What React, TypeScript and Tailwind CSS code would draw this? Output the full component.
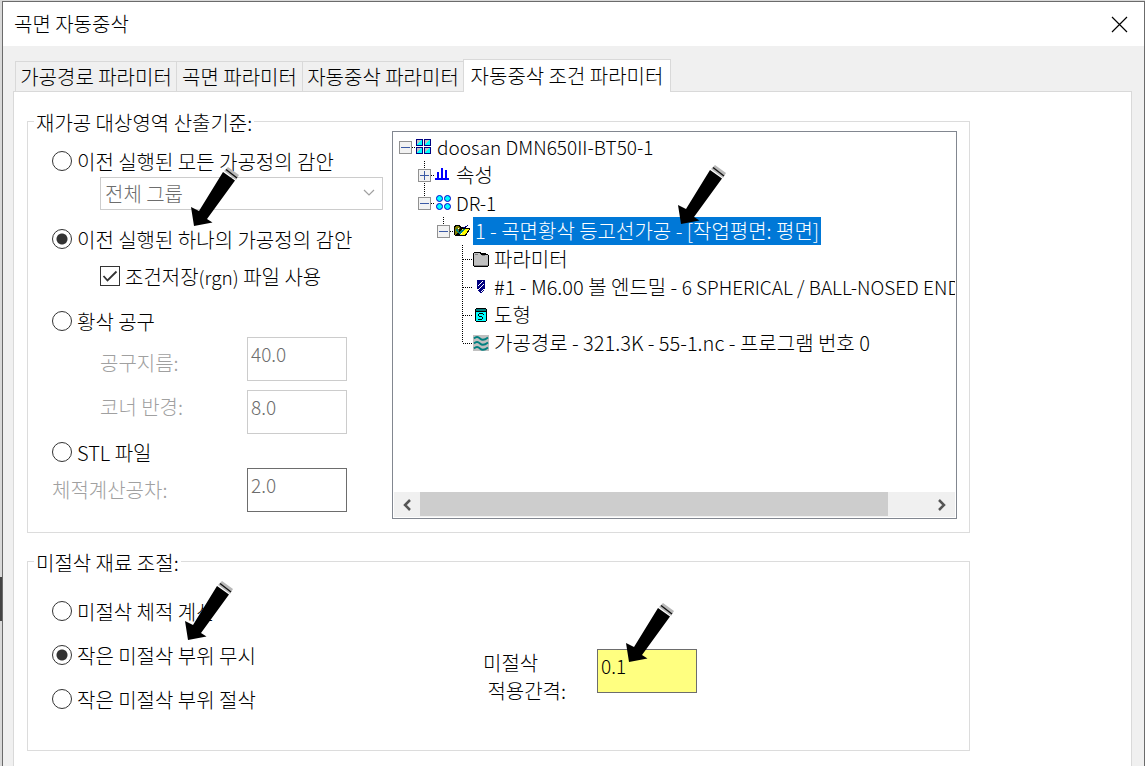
import { ReactNode } from "react";
import clsx from "clsx";

const TABS = [
  { label: "가공경로 파라미터", width: "w-[161px]" },
  { label: "곡면 파라미터", width: "w-[126px]" },
  { label: "자동중삭 파라미터", width: "w-[161px]" },
  { label: "자동중삭 조건 파라미터", width: "w-[208px]" },
];

function PointerArrow({ className }: { className: string }) {
  return (
    <svg className={clsx("pointer-events-none absolute z-10", className)} width="48" height="60" viewBox="0 0 48 60" aria-hidden="true">
      <path d="M33 4 L37 0 L48 8 L45 13Z" fill="#b9b9b9" />
      <path d="M35 2.5 L46 11" stroke="#111" strokeWidth="1.4" />
      <path d="M32 5 L44 13.500 L16 52 L21.500 55.500 L3 59 L0 40 L8 44Z" fill="#000" />
    </svg>
  );
}

function Radio({ name, label, checked, children }: { name: string; label: string; checked?: boolean; children?: ReactNode }) {
  return (
    <label className="relative flex h-7 items-center gap-[5px]">
      <input
        type="radio"
        name={name}
        defaultChecked={checked}
        className="size-5 shrink-0 appearance-none rounded-full border border-[#333] bg-white checked:bg-[radial-gradient(circle,#333_5px,#fff_6px)]"
      />
      <span className="pt-0.5">{label}</span>
      {children}
    </label>
  );
}

function NumberInput({ id, value, dark }: { id: string; value: string; dark?: boolean }) {
  return (
    <input
      id={id}
      defaultValue={value}
      disabled
      className={clsx("h-11 w-[100px] border bg-white px-[3px] pb-3 text-[19px] text-[#6d6d6d]", dark ? "border-[#6d6d6d]" : "border-[#ccc]")}
    />
  );
}

/* tree icons, drawn on a 16px grid */

function MachineIcon() {
  return (
    <>
      {[[0, 0], [8, 0], [0, 8], [8, 8]].map(([x, y]) => (
        <g key={`${x}-${y}`}>
          <rect x={x} y={y} width="7" height="7" fill="#000080" />
          <rect x={x + 1} y={y + 1} width="5" height="5" fill="#00ffff" />
          <path d={`M${x + 1} ${y + 1}h4l-4 4z`} fill="#c0c0c0" />
        </g>
      ))}
    </>
  );
}

function PropertiesIcon() {
  return <path d="M0 11h14v2H0zM2 5h2v6H2zM6 1h2v10H6zM10 3h2v8h-2z" fill="#0000ff" />;
}

function GroupIcon() {
  return (
    <g fill="#00ffff" stroke="#0000d0" shapeRendering="auto">
      <circle cx="4.500" cy="3.500" r="3" />
      <circle cx="12.500" cy="3.500" r="3" />
      <circle cx="4.500" cy="11.500" r="3" />
      <circle cx="12.500" cy="11.500" r="3" />
    </g>
  );
}

function OperationIcon() {
  return (
    <>
      <path d="M0 4l1-2h5l1 2h5v9H1L0 12z" fill="#000" />
      <path d="M1 4l1-1h3l1 2h5v1H6l-4 6H1z" fill="#808000" />
      <path d="M6 5h10v1l-4 7H2z" fill="#000" />
      <path d="M8 6h7l-4 6H6z" fill="#ffff00" />
      <path d="M2 6h2v2h1v1h1V8h1V7h2V6h2v1h-1v1H9v1H8v1H7v1H5v-1H4V9H3V8H2z" fill="#008080" />
      <path d="M9 4h2v1H9zM11 3h2v1h-2zM13 2h1v1h-1z" fill="#000080" />
      <path d="M4 5h1v1H4zM7 10h1v1H7z" fill="#fff" />
    </>
  );
}

function ParameterIcon() {
  return (
    <>
      <path d="M1 1h6l2 2V2h4v1h2v1h1v11h-1v1H1v-1H0V2h1z" fill="#000" />
      <path d="M1 2h5l2 2h7v11H1z" fill="#c0c0c0" />
      <path d="M2 3h3v1H2zM9 4h3v1H9zM1 14h14v1H1z" fill="#808080" />
    </>
  );
}

function ToolIcon() {
  return (
    <>
      <path d="M4 1h8v9h-1v2h-1v1H9v1H7v-1H6v-1H5v-2H4z" fill="#000080" />
      <path d="M5 6h1V5h1V4h1V3h1V2h1v1H9v1H8v1H7v1H6v1H5zM5 10h1V9h1V8h1V7h1V6h1V5h1v1h-1v1H9v1H8v1H7v1H6v1H5zM8 12h1v-1h1v-1h1v1h-1v1H9v1H8z" fill="#fff" />
    </>
  );
}

function GeometryIcon() {
  return (
    <>
      <path d="M3 1h10v1h1v12h-1v1H3v-1H2V2h1z" fill="#000" />
      <path d="M3 2h10v2H3z" fill="#008080" />
      <path d="M3 5h10v9H3z" fill="#00ffff" />
      <path d="M6 6h4v1H6zM5 7h1v2H5zM6 9h3v1H6zM9 10h1v2H9zM5 12h4v1H5zM10 7h1v1h-1z" fill="#000" />
    </>
  );
}

function ToolpathIcon() {
  return (
    <>
      <rect width="16" height="16" fill="#c0c0c0" />
      <path
        d="M1 3.500q3-3 6 0t8-1M1 8.500q3-3 6 0t8-1M1 13.500q3-3 6 0t8-1"
        fill="none"
        stroke="#008080"
        strokeWidth="1.800"
        shapeRendering="auto"
      />
    </>
  );
}

type Item = {
  level: number;
  label: string;
  detail?: string;
  icon: ReactNode;
  box?: "plus" | "minus";
  // dotted guide segments inside the 19x28 cell
  guide: string;
  selected?: boolean;
  latin?: boolean;
};

const ITEMS: Item[] = [
  { level: 0, label: "doosan DMN650II-BT50-1", icon: <MachineIcon />, box: "minus", guide: "M10 14.500H19", latin: true },
  { level: 1, label: "속성", icon: <PropertiesIcon />, box: "plus", guide: "M9.500 0V28M10 14.500H19" },
  { level: 1, label: "DR-1", icon: <GroupIcon />, box: "minus", guide: "M9.500 0V14M10 14.500H19", latin: true },
  { level: 2, label: "1 - 곡면황삭 등고선가공 - [작업평면: 평면]", icon: <OperationIcon />, box: "minus", guide: "M9.500 0V14M10 14.500H19", selected: true },
  { level: 3, label: "파라미터", icon: <ParameterIcon />, guide: "M9.500 0V28M10 14.500H19" },
  { level: 3, label: "#1 - M6.00 볼 엔드밀 - ", detail: "6 SPHERICAL / BALL-NOSED END MILL", icon: <ToolIcon />, guide: "M9.500 0V28M10 14.500H19" },
  { level: 3, label: "도형", icon: <GeometryIcon />, guide: "M9.500 0V28M10 14.500H19" },
  { level: 3, label: "가공경로 - 321.3K - 55-1.nc - 프로그램 번호 0", icon: <ToolpathIcon />, guide: "M9.500 0V14M10 14.500H19" },
];

const INDENT = ["pl-0.5", "pl-[21px]", "pl-10", "pl-[59px]"];

function TreeRow({ item }: { item: Item }) {
  return (
    <li role="treeitem" aria-selected={!!item.selected} className={clsx("flex h-7 whitespace-nowrap", INDENT[item.level])}>
      <svg className="shrink-0" width="19" height="28" shapeRendering="crispEdges" aria-hidden="true">
        <path d={item.guide} stroke="#000" strokeDasharray="1 1" fill="none" />
        {item.box && (
          <>
            <rect x="3.500" y="8.500" width="12" height="12" fill="#f2f2f2" stroke="#919191" />
            <path d={item.box === "plus" ? "M5 14.500H14M9.500 10V19" : "M5 14.500H14"} stroke="#3b5aa5" />
          </>
        )}
      </svg>
      <svg className="mt-1.5 ml-px shrink-0" width="16" height="16" shapeRendering="crispEdges" aria-hidden="true">
        {item.icon}
      </svg>
      <span
        className={clsx(
          "relative ml-[3px] h-7 px-0.5 leading-7",
          item.selected && "bg-[#0078d7] text-white",
          item.latin && "text-[19px]"
        )}
      >
        {item.label}
        {item.detail && <span className="text-[19px]">{item.detail}</span>}
        {item.selected && <PointerArrow className="-top-[52px] left-[205px]" />}
      </span>
    </li>
  );
}

function OperationTree() {
  return (
    <div className="flex min-w-0 flex-1 flex-col justify-between border border-[#828790] bg-white p-px">
      <ul role="tree" className="overflow-hidden">
        {ITEMS.map((item) => (
          <TreeRow key={item.label} item={item} />
        ))}
      </ul>
      <div className="flex h-[25px] bg-[#f0f0f0]">
        <button type="button" aria-label="왼쪽으로 스크롤" className="grid w-[26px] place-items-center">
          <svg width="10" height="12" fill="none" stroke="#555" strokeWidth="2.500"><path d="M8 1L3 6l5 5" /></svg>
        </button>
        <div className="flex-1">
          <div className="h-6 w-[92%] bg-[#cdcdcd]" />
        </div>
        <button type="button" aria-label="오른쪽으로 스크롤" className="grid w-[26px] place-items-center">
          <svg width="10" height="12" fill="none" stroke="#555" strokeWidth="2.500"><path d="M2 1l5 5-5 5" /></svg>
        </button>
      </div>
    </div>
  );
}

function Group({ title, children }: { title: string; children: ReactNode }) {
  return (
    <fieldset className="w-full max-w-[943px] min-w-0 border border-[#dcdcdc]">
      <legend className="ml-1.5 px-0.5 pt-1 leading-4">{title}</legend>
      {children}
    </fieldset>
  );
}

export default function App() {
  return (
    <div className="relative flex min-h-screen bg-[#d9d9d9] pt-px pl-0.5 font-['Noto_Sans_CJK_KR',sans-serif] text-xl leading-7 font-light text-black">
      <div className="absolute top-[577px] left-0 h-11 w-0.5 bg-[#444]" />
      <main className="flex min-w-0 flex-1 flex-col border border-b-0 border-[#6b6b6b] bg-[#f0f0f0]">
        <header className="flex h-11 items-center justify-between bg-white pr-4 pl-[11px]">
          <h1>곡면 자동중삭</h1>
          <button type="button" aria-label="닫기">
            <svg width="17" height="17" fill="none" stroke="#000" strokeWidth="1.200"><path d="M1 1l15 15M16 1L1 16" /></svg>
          </button>
        </header>

        <div className="flex flex-1 flex-col pt-[13px] pr-3 pl-2.5">
          <div role="tablist" className="ml-0.5 flex items-end">
            {TABS.map((tab, i) => (
              <button
                key={tab.label}
                type="button"
                role="tab"
                aria-selected={i === 3}
                className={clsx(
                  "shrink-0 whitespace-nowrap border-[#d9d9d9]",
                  tab.width,
                  i === 3 ? "relative -mb-px h-[33px] border border-b-0 bg-white" : "h-[30px] border-t border-l"
                )}
              >
                {tab.label}
              </button>
            ))}
          </div>

          <div role="tabpanel" className="flex flex-1 flex-col gap-[18px] border border-b-0 border-[#d9d9d9] bg-white px-[13px] pt-[19px]">
            <Group title="재가공 대상영역 산출기준:">
              <div className="flex gap-[9px] pr-3 pb-[13px] pl-6">
                <div className="w-[331px] shrink-0 pt-4 pb-[7px]">
                  <Radio name="source" label="이전 실행된 모든 가공정의 감안" />
                  <div className="relative mt-0.5 ml-12">
                    <select
                      aria-label="그룹"
                      disabled
                      className="block h-[33px] w-full appearance-none border border-[#ccc] bg-white px-1 text-[#6d6d6d] opacity-100"
                    >
                      <option>전체 그룹</option>
                    </select>
                    <svg className="absolute top-3 right-2" width="12" height="8" fill="none" stroke="#a0a0a0" strokeWidth="1.200"><path d="M1 1l5 5 5-5" /></svg>
                  </div>
                  <div className="mt-[15px]">
                    <Radio name="source" label="이전 실행된 하나의 가공정의 감안" checked>
                      <PointerArrow className="-top-[58px] left-[139px]" />
                    </Radio>
                  </div>
                  <label className="mt-[9px] ml-12 flex h-7 items-center gap-[5px]">
                    <span className="grid">
                      <input type="checkbox" defaultChecked className="peer col-start-1 row-start-1 size-5 appearance-none border border-[#333] bg-white" />
                      <svg className="pointer-events-none invisible col-start-1 row-start-1 peer-checked:visible" width="20" height="20" fill="none" stroke="#333" strokeWidth="1.800"><path d="M3.500 10l4 4.500 9-9" /></svg>
                    </span>
                    <span className="pt-0.5">
                      조건저장<span className="text-[19px]">(rgn)</span> 파일 사용
                    </span>
                  </label>
                  <div className="mt-[17px] mb-0.5">
                    <Radio name="source" label="황삭 공구" />
                  </div>
                  <div className="flex text-[#a0a0a0]">
                    <div className="flex w-[195px] flex-col gap-4 pt-3 pl-12">
                      <label htmlFor="diameter">공구지름:</label>
                      <label htmlFor="radius">코너 반경:</label>
                    </div>
                    <div className="flex flex-col gap-[9px]">
                      <NumberInput id="diameter" value="40.0" />
                      <NumberInput id="radius" value="8.0" />
                    </div>
                  </div>
                  <div className="mt-1 mb-0.5">
                    <Radio name="source" label="STL 파일" />
                  </div>
                  <div className="flex">
                    <label htmlFor="tolerance" className="w-[195px] pt-2 text-[#a0a0a0]">체적계산공차:</label>
                    <NumberInput id="tolerance" value="2.0" dark />
                  </div>
                </div>
                <OperationTree />
              </div>
            </Group>

            <Group title="미절삭 재료 조절:">
              <div className="flex pb-[29px] pl-6">
                <div className="flex w-[431px] flex-col gap-4 pt-[26px] pb-2">
                  <Radio name="rest" label="미절삭 체적 계산" />
                  <Radio name="rest" label="작은 미절삭 부위 무시" checked>
                    <PointerArrow className="-top-[60px] left-[133px]" />
                  </Radio>
                  <Radio name="rest" label="작은 미절삭 부위 절삭" />
                </div>
                <div className="flex pt-[78px]">
                  <label htmlFor="step" className="w-[114px]">
                    미절삭
                    <br />
                    &nbsp;적용간격:
                  </label>
                  <div className="relative">
                    <input id="step" defaultValue="0.1" className="h-11 w-[100px] border border-[#6d6d6d] bg-[#ffff80] px-[3px] pb-3 text-[19px]" />
                    <PointerArrow className="-top-[46px] left-[29px]" />
                  </div>
                </div>
              </div>
            </Group>
          </div>
        </div>
      </main>
    </div>
  );
}
